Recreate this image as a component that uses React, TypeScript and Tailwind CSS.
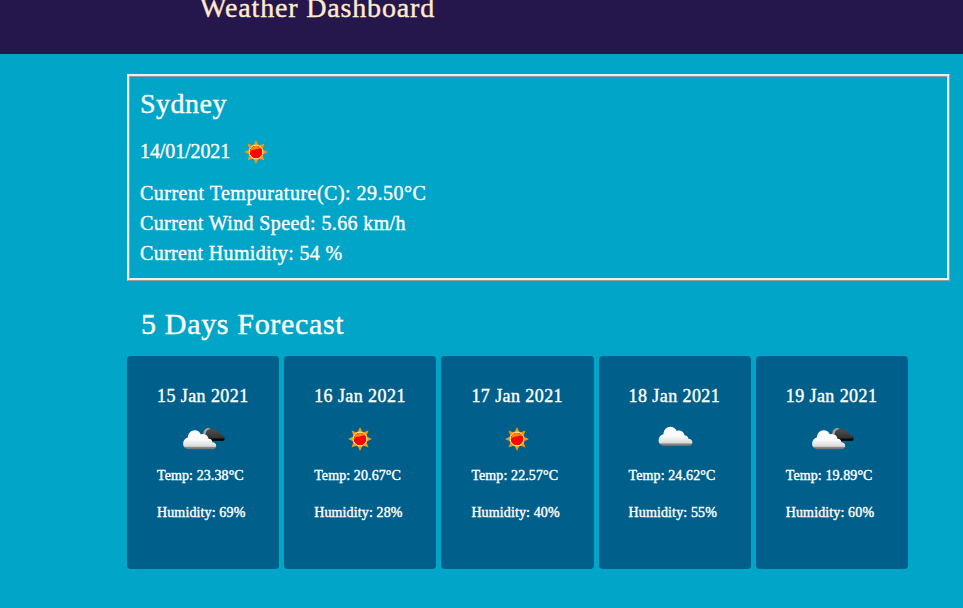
import React from "react";

type Sky = "sun" | "cloud" | "broken";

const CLOUD =
  "M6 19.3 C2.5 19.3 0 17 0 13.8 C0 10.6 2 8.2 4.8 7.6 C5.2 3 8 0.2 11.8 0.2 C14.8 0.2 17 1.8 18.2 4.4 C21.5 3.2 25.2 4.8 26 8.8 C28.4 8.6 29.6 10.2 29.8 12.2 C32 12.2 33.8 13.6 33.8 15.8 C33.8 18.2 32 19.3 29.8 19.3 Z";

function Defs() {
  return (
    <svg className="absolute h-0 w-0" aria-hidden="true">
      <defs>
        <linearGradient id="white" x1="0" y1="0" x2="0" y2="1">
          <stop offset="0" stopColor="#fff" />
          <stop offset="0.5" stopColor="#fafafa" />
          <stop offset="0.84" stopColor="#dadada" />
          <stop offset="0.9" stopColor="#8a8a8a" />
          <stop offset="1" stopColor="#6c6c6c" />
        </linearGradient>
        <linearGradient id="dark" x1="0" y1="0" x2="0" y2="1">
          <stop offset="0" stopColor="#555" />
          <stop offset="0.3" stopColor="#484646" />
          <stop offset="0.75" stopColor="#333" />
          <stop offset="0.85" stopColor="#050505" />
          <stop offset="1" stopColor="#111" />
        </linearGradient>
      </defs>
    </svg>
  );
}

function SkyIcon({ sky }: { sky: Sky }) {
  return (
    <svg width="50" height="50" viewBox="0 0 50 50" className="block shrink-0">
      {sky === "sun" && (
        <g>
          <g fill="#f39a0c">
            {[0, 45, 90, 135, 180, 225, 270, 315].map((a) => (
              <path key={a} d="M25 13 L28 19.5 H22 Z" transform={`rotate(${a} 25 25)`} />
            ))}
          </g>
          <circle cx="25" cy="25" r="7.7" fill="#f3a51f" />
          <circle cx="25" cy="25" r="6.8" fill="#fb0500" stroke="#ffe9a6" strokeWidth="1" />
          <path d="M19.4 25 C19 21.5 21.8 19 25 19 C27.4 19 29.2 20 30.2 21.8 C27.5 21.2 26.4 22.2 24 22.6 C21.8 22.8 20.6 23 19.4 25 Z" fill="#ff8a00" />
        </g>
      )}
      {sky === "cloud" && <path d={CLOUD} fill="url(#white)" transform="translate(8.6 12.6)" />}
      {sky === "broken" && (
        <g>
          <path
            d="M25.5 21 C25 17 27.3 14 30.8 14 C32.6 14 33.8 14.8 34.6 16 C37.3 14.4 40.4 15.6 41.2 18.8 C42.6 19 43.4 20.2 43.6 21.6 C45.6 21.8 46.7 22.8 46.7 24.4 C46.7 26.2 45.6 27.1 43.8 27.1 H30 Z"
            fill="url(#dark)"
          />
          <path d="M25.3 20.5 C25 16.6 27.6 14.1 30.8 14.1 L32.4 15 C29.4 15.5 28 17 27.6 20 Z" fill="#a5a5a5" />
          <path d={CLOUD} fill="url(#white)" transform="translate(5.1 16) scale(0.98 1)" />
        </g>
      )}
    </svg>
  );
}

const days: { date: string; sky: Sky; temp: string; humidity: string }[] = [
  { date: "15 Jan 2021", sky: "broken", temp: "23.38", humidity: "69" },
  { date: "16 Jan 2021", sky: "sun", temp: "20.67", humidity: "28" },
  { date: "17 Jan 2021", sky: "sun", temp: "22.57", humidity: "40" },
  { date: "18 Jan 2021", sky: "cloud", temp: "24.62", humidity: "55" },
  { date: "19 Jan 2021", sky: "broken", temp: "19.89", humidity: "60" },
];

export default function App() {
  return (
    <div className="h-[608px] w-[963px] overflow-hidden bg-[#00a5c8] font-['Liberation_Serif',serif] whitespace-nowrap text-white [-webkit-text-stroke:0.4px_currentColor]">
      <Defs />
      <header className="h-[54px] overflow-hidden bg-[#25164b] pl-[200px]">
        <h1 className="-mt-[6px] text-[28px] leading-[28px] tracking-[0.83px] text-[#ffebcd]">Weather Dashboard</h1>
      </header>
      <main className="pt-5 pl-[127px]">
        <section className="h-[207px] w-[823px] border-3 border-[#eee] pt-3 pl-[10px] [border-style:ridge]">
          <h2 className="text-[28px] leading-[30px] tracking-[0.5px]">Sydney</h2>
          <div className="mt-2 flex h-[50px] items-center">
            <p className="-mt-[2px] w-[91px] text-xl leading-[30px] tracking-[-0.1px]">14/01/2021</p>
            <SkyIcon sky="sun" />
          </div>
          <div className="mt-px text-xl leading-[30px]">
            <p className="tracking-[0.49px]">Current Tempurature(C): 29.50°C</p>
            <p className="tracking-[0.38px]">Current Wind Speed: 5.66 km/h</p>
            <p className="tracking-[0.34px]">Current Humidity: 54 %</p>
          </div>
        </section>
        <h2 className="mt-[25px] pl-[14px] text-3xl leading-9 tracking-[0.67px]">5 Days Forecast</h2>
        <div className="mt-[14px] flex gap-[5px]">
          {days.map((d) => (
            <article key={d.date} className="h-[213px] w-[152.2px] rounded bg-[#005f8b] px-[30px] pt-7">
              <h3 className="text-lg leading-6 tracking-[0.42px]">{d.date}</h3>
              <div className="mt-[6px] flex justify-center">
                <SkyIcon sky={d.sky} />
              </div>
              <p className="mt-[2px] text-sm leading-5 tracking-[0.1px]">Temp: {d.temp}°C</p>
              <p className="mt-[17px] text-sm leading-5 tracking-[0.13px]">Humidity: {d.humidity}%</p>
            </article>
          ))}
        </div>
      </main>
    </div>
  );
}
